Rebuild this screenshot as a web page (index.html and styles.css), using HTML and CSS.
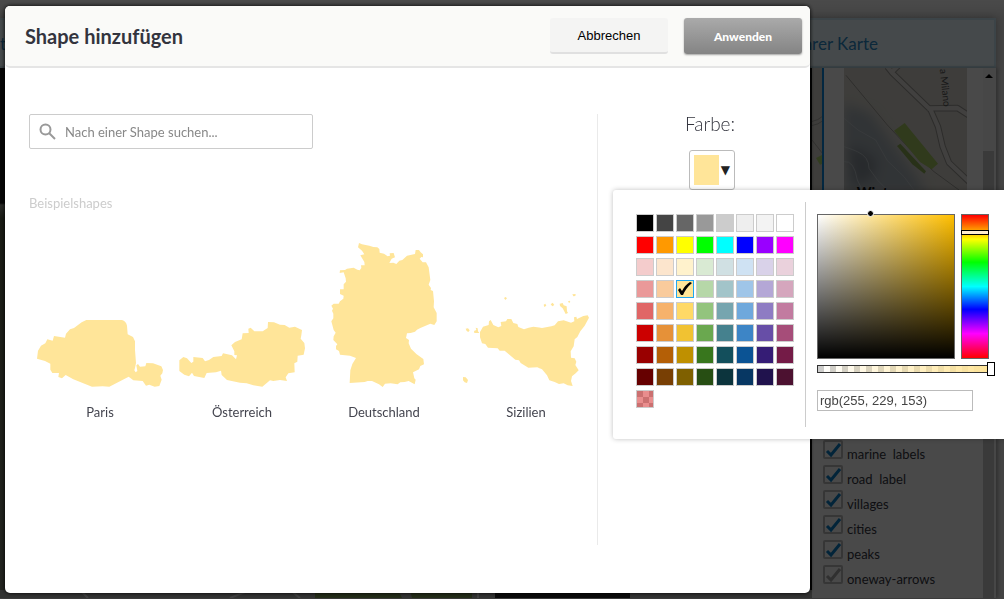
FILE: index.html
```html
<!DOCTYPE html>
<html lang="de">
<head>
<meta charset="utf-8">
<title>Shape hinzufügen</title>
<link rel="stylesheet" href="styles.css">
</head>
<body>
<div class="app">
  <header class="app-header"><span>t</span><span>Stil Ihrer Karte</span></header>
  <div class="app-body">
    <div class="canvas">
      <svg class="canvas-map" viewBox="0 0 812 8" preserveAspectRatio="none" aria-hidden="true">
        <path fill="#a9aaa8" d="M0 0H812V8H0z"/>
        <path fill="#7c9a55" d="M315 0H398L402 8H315zM410 0H472V8H412z"/>
        <path fill="#202020" d="M495 0H630V8H495z"/>
        <path stroke="#ddd" stroke-width="2" d="M80 0l8 8M230 8l20-8M290 0l10 8M478 0v8"/>
      </svg>
    </div>
    <aside class="panel">
      <div class="panel-content">
        <div class="tiles">
          <svg class="tile tile-active" viewBox="0 204 36 366" preserveAspectRatio="xMinYMin slice" aria-hidden="true">
            <path fill="#cfccc5" d="M0 204H36V570H0z"/>
            <g fill="none" stroke="#a5a39e" stroke-width="3"><path d="M-5 366Q18 362 36 346M-5 378Q20 374 36 360M0 420L36 466"/></g>
            <path fill="#a9cc6a" d="M12 474L36 462V490L24 494z"/>
          </svg>
          <svg class="tile" viewBox="120 204 369 366" preserveAspectRatio="xMinYMin slice" aria-hidden="true">
            <defs><filter id="soft"><feGaussianBlur stdDeviation="18"/></filter></defs>
            <path fill="#cfccc5" d="M120 204H489V570H120z"/>
            <g filter="url(#soft)">
              <path fill="#a4adb4" d="M120 310L200 340L250 410L330 520L370 580H120z"/>
              <path fill="#858d95" d="M130 440L180 450L220 480L210 530L150 560z"/>
            </g>
            <g fill="none" stroke="#c4cbd0" stroke-width="2"><path d="M120 355L162 390L215 420L250 482L300 530L330 570M120 440Q150 450 160 455Q195 470 195 505Q220 545 250 570M120 485Q150 480 160 540L175 570"/></g>
            <path fill="none" stroke="#9b9994" stroke-width="3" d="M126 226L250 375L320 450L390 515L465 570"/>
            <g fill="none" stroke="#95938f" stroke-width="19" stroke-linejoin="round"><path d="M250 200L265 219L380 330L402 380L416 440L435 488L500 550M370 325L460 324L500 350M265 214L285 195"/></g>
            <g fill="none" stroke="#dad8d3" stroke-width="13" stroke-linejoin="round"><path d="M250 200L265 219L380 330L402 380L416 440L435 488L500 550M370 325L460 324L500 350M265 214L285 195"/></g>
            <path fill="#a1c25f" d="M270 392L302 369L402 491L383 508L348 486z"/>
            <path fill="#86a551" d="M279 438L289 431L366 514L361 521L325 493z"/>
            <text class="map-street" transform="translate(407 208) rotate(84)">a Milano</text>
            <text class="map-place" x="158" y="590">Winter</text>
          </svg>
        </div>
        <div class="layers">
          <label><input type="checkbox" checked><svg viewBox="0 0 20 19"><path d="M4 11l4 4 9-11"/></svg><span>marine  labels</span></label>
          <label><input type="checkbox" checked><svg viewBox="0 0 20 19"><path d="M4 11l4 4 9-11"/></svg><span>road  label</span></label>
          <label><input type="checkbox" checked><svg viewBox="0 0 20 19"><path d="M4 11l4 4 9-11"/></svg><span>villages</span></label>
          <label><input type="checkbox" checked><svg viewBox="0 0 20 19"><path d="M4 11l4 4 9-11"/></svg><span>cities</span></label>
          <label><input type="checkbox" checked><svg viewBox="0 0 20 19"><path d="M4 11l4 4 9-11"/></svg><span>peaks</span></label>
          <label class="muted"><input type="checkbox" checked><svg viewBox="0 0 20 19"><path d="M4 11l4 4 9-11"/></svg><span>oneway-arrows</span></label>
        </div>
      </div>
      <div class="scrollbar"><svg viewBox="0 0 8 4" width="8" height="4"><path d="M0 4L4 0L8 4z"/></svg><div class="scroll-thumb"></div></div>
    </aside>
  </div>
</div>

<div class="overlay">
  <section class="dialog" role="dialog" aria-labelledby="dialog-title">
    <header class="dialog-header">
      <h1 id="dialog-title">Shape hinzufügen</h1>
      <button class="btn btn-cancel" type="button">Abbrechen</button>
      <button class="btn btn-apply" type="button">Anwenden</button>
    </header>
    <div class="dialog-body">
      <main class="shapes">
        <label class="search">
          <svg viewBox="0 0 17 17" width="17" height="17" aria-hidden="true"><circle cx="6.500" cy="6.500" r="5"/><path d="M10 10l6 6"/></svg>
          <input type="text" placeholder="Nach einer Shape suchen..." aria-label="Nach einer Shape suchen">
        </label>
        <h2>Beispielshapes</h2>
        <div class="shape-grid">
          <figure>
            <svg viewBox="27 -180 426 450"><path d="M199 60H306Q318 63 321 77L323 103L339 111L345 124V150L348 189L345 204L343 211L347 217L352 213L349 196L354 192L360 200L376 199L379 189L399 190L424 199L429 210L427 220L421 227L425 239L418 258L404 260L388 254L378 257L368 243L340 241L326 230L268 260L248 259L216 260L160 238L137 225L126 235L115 231L117 219L97 219L91 209V191L75 183L51 176L54 152L63 137L76 130L82 118L98 122L102 108L135 113L138 101L150 88L162 84L185 67z"/></svg>
            <figcaption>Paris</figcaption>
          </figure>
          <figure>
            <svg viewBox="3 -180 426 450"><path d="M294 66L312 67L330 74L344 75L358 83L375 80L391 88L396 90L394 106L392 116L403 129L405 145L401 164L383 167L382 185L373 190L374 217L355 220L347 232L351 243L330 240L310 243L300 241L277 260L250 256L230 250L210 248L171 240L155 225L153 212L138 217L110 219L103 234L72 228L66 218L57 229L43 224L28 213V181L40 171L51 175L64 189L70 185V171L98 174L105 184L117 180L130 171L155 168L159 160L186 166L198 178L201 166L193 165L193 154L184 136L195 126L215 118L218 100L236 99L235 86L242 83L253 94L278 94L293 84z"/></svg>
            <figcaption>Österreich</figcaption>
          </figure>
          <figure>
            <svg viewBox="9 30 426 450"><path d="M147 39L156 43L178 47L190 51L202 52L208 57L209 68L222 71L233 79L240 77L239 70L251 69L255 82L245 86L238 99L250 98L259 102L268 92L277 90L291 77L315 72L317 60L327 60L332 67L339 73V82L334 81L329 86L338 97L348 97L356 112L361 150L356 164L363 174L362 180L369 183L372 214L371 232L380 249V274L373 285L361 281L331 294L321 299L315 305L302 309L291 310L288 324L297 330L296 340L303 356L320 373L340 387L342 403L331 408L327 418L309 427L313 445L317 449L314 463L296 453L284 456L271 457L263 463L242 460L225 461L218 471L207 463L186 453L173 453L164 456L119 459L121 421L127 402L138 384L120 377L90 374L87 363L78 358V348L82 343L70 330L71 319L77 308L71 300L64 274L70 265V251L66 242L69 236L64 227L71 221L86 221L90 214L100 206L101 197L90 192V178H101V163L108 155L107 145L101 127L89 129L90 121L105 120L111 116L131 113L142 119L149 121L154 114L153 106H164L163 96L151 76L163 73L156 62L144 52z"/></svg>
            <figcaption>Deutschland</figcaption>
          </figure>
          <figure>
            <svg viewBox="15 -120 426 450"><path d="M122 120L130 135L145 142L154 138L152 126L168 124L172 117H184L190 129L202 132L205 141L222 148L236 143L250 140L276 144L304 139L314 136L324 124L341 121L363 128L373 124L372 112L379 110L381 117L400 108L413 106L417 113L404 137L391 154L382 171L374 178L371 199L362 214L363 233L374 235L379 245L376 255L386 271L377 280L366 289L363 303L368 318L353 316L341 310L327 312L314 306L298 301L291 286L276 268L262 262L235 263L212 249L207 241L196 239L164 212H149L143 205L114 203L106 192L96 190L90 172V156L99 140L116 135L117 124z"/><path d="M162 54L167 51L171 55L166 60zM281 74L286 71L289 77L283 81zM302 73L308 68L313 75L307 79zM329 71L338 69L341 76L350 79L351 94L354 99L347 102L338 85L330 78zM354 64L359 62L361 66L357 69zM367 43L377 42L376 48L370 49zM47 146L54 145L59 151L55 156L50 153zM77 143L83 145L84 154L88 159L73 159L72 153L79 150zM39 291L47 292L54 300L51 309L44 307L39 301z"/></svg>
            <figcaption>Sizilien</figcaption>
          </figure>
        </div>
      </main>
      <aside class="color-side">
        <h3>Farbe:</h3>
        <div class="color-anchor">
          <button class="color-button" type="button" aria-label="Farbe wählen"><span class="color-preview"></span><span class="caret">▼</span></button>
          <div class="picker">
            <div class="palette"></div>
            <div class="picker-tools">
              <div class="gradients">
                <div class="saturation"><span class="dragger"></span></div>
                <div class="hue"><input type="range" min="0" max="360" value="40" aria-label="Farbton"></div>
              </div>
              <div class="alpha"><input type="range" min="0" max="100" value="100" aria-label="Deckkraft"></div>
              <input class="color-text" type="text" value="rgb(255, 229, 153)" aria-label="Farbwert">
            </div>
          </div>
        </div>
      </aside>
    </div>
  </section>
</div>
<script src="script.js"></script>
</body>
</html>
```

FILE: styles.css
```css
* { box-sizing: border-box; }
body {
  margin: 0;
  min-height: 100vh;
  overflow: hidden;
  background: #f4f4f4;
  color: #33343e;
  font-family: Lato, "Open Sans", sans-serif;
  font-size: 14px;
}
h1, h2, h3, figure { margin: 0; }
button, input { font: inherit; }

/* application behind the dialog */
.app {
  display: flex;
  flex-direction: column;
  height: 100vh;
  padding: 18px 8px 1px 0;
  background: linear-gradient(#f8f8f8, #e2e2e2 18px);
}
.app-header {
  display: flex;
  justify-content: space-between;
  align-items: center;
  height: 50px;
  padding: 0 116px 0 0;
  border: 2px solid #c9e5f0;
  border-left: 0;
  background: #e8f6fb;
  box-shadow: 0 0 8px rgba(0, 0, 0, .3);
  color: #2a86c4;
  font-size: 17px;
}
.app-body { flex: 1; display: flex; min-height: 0; box-shadow: 2px 0 4px rgba(0, 0, 0, .3); }
.canvas {
  flex: 1;
  display: flex;
  align-items: flex-end;
  background: linear-gradient(90deg, transparent 50%, #0a0a0a 50%), linear-gradient(#141414 135px, #8c8f86 137px, #565c45 150px, #74796a 100%);
}
.canvas-map { width: 100%; height: 8px; }
.panel { display: flex; width: 184px; background: #f4f4f4; }
.panel-content {
  flex: 1;
  display: flex;
  flex-direction: column;
  justify-content: space-between;
  min-width: 0;
}
.tiles { display: flex; gap: 20px; }
.tile { width: 123px; height: 122px; }
.tile-active { width: 12px; border-right: 2px solid #0a84d8; }
.map-street { fill: #555; font: 30px Lato, sans-serif; }
.map-place { fill: #111; font: 900 42px Lato, sans-serif; }
.layers { padding: 0 0 8px 11px; font-size: 13px; }
.layers label { display: grid; grid-template-columns: 20px 1fr; gap: 4px; height: 25px; }
.layers input {
  grid-area: 1 / 1;
  appearance: none;
  width: 20px;
  height: 19px;
  margin: 0;
  border: 2px solid #b4b4b4;
  border-radius: 2px;
}
.layers svg { grid-area: 1 / 1; width: 20px; height: 19px; fill: none; stroke: #0879c0; stroke-width: 3; }
.layers .muted svg { stroke: #a0a0a0; }
.layers span { padding-top: 2px; line-height: 25px; white-space: pre; }
.scrollbar { display: flex; flex-direction: column; align-items: center; width: 13px; padding: 6px 2px 0 0; background: #eee; }
.scroll-thumb { flex: 1; width: 11px; margin-top: 73px; background: #c2c2c2; }

/* dialog */
.overlay {
  position: fixed;
  inset: 0;
  display: flex;
  padding: 6px 194px 6px 5px;
  background: rgba(0, 0, 0, .7);
}
.dialog {
  flex: 1;
  border-radius: 5px;
  background: #fff;
  box-shadow: 0 0 4px #000;
}
.dialog-header {
  display: flex;
  align-items: center;
  gap: 16px;
  height: 62px;
  padding: 0 8px 0 20px;
  border-bottom: 2px solid #e5e5e5;
  border-radius: 5px;
  background: #fafaf8;
}
.dialog-header h1 { flex: 1; font-size: 20px; font-weight: 700; }
.btn { width: 118px; height: 36px; padding: 0; border: 0; border-radius: 3px; }
.btn-cancel {
  border-bottom: 2px solid #e0e0e0;
  background: #f4f4f3;
  color: #000;
  font: 13px "Liberation Sans", Arial, sans-serif;
}
.btn-apply {
  background: linear-gradient(#aaa, #848484);
  box-shadow: 0 1px 2px rgba(0, 0, 0, .35);
  color: #fff;
  font-size: 12px;
  font-weight: 900;
}
.dialog-body { display: flex; padding: 46px 0 48px 24px; height: calc(100% - 62px); }
.shapes { flex: 1; }
.search {
  display: flex;
  align-items: center;
  gap: 9px;
  width: 284px;
  height: 35px;
  padding: 0 9px;
  border: 1px solid #ccc;
  border-radius: 2px;
}
.search svg { fill: none; stroke: #999; stroke-width: 2; }
.search input { flex: 1; min-width: 0; padding: 0; border: 0; outline: 0; background: none; font-size: 13px; }
.search input::placeholder { color: #888; opacity: 1; }
.shapes h2 { margin-top: 44px; color: #ccc; font-size: 13px; font-weight: 400; line-height: 20px; }
.shape-grid { display: grid; grid-template-columns: repeat(4, 1fr); margin-top: 27px; }
.shape-grid svg { display: block; width: 100%; height: 150px; fill: #ffe599; }
.shape-grid figcaption { padding-top: 12px; color: #44454f; font-size: 13px; line-height: 20px; text-align: center; }
.color-side { display: flex; flex-direction: column; align-items: center; width: 213px; border-left: 1px solid #eaeaea; }
.color-side h3 { margin-right: -12px; font-size: 19px; font-weight: 300; line-height: 20px; }
.color-anchor { position: relative; margin: 16px -16px 0 0; }
.color-button {
  display: flex;
  align-items: center;
  gap: 2px;
  width: 46px;
  height: 40px;
  padding: 0 4px;
  border: 1px solid #bbb;
  border-radius: 3px;
  background: #fff;
  color: #222;
}
.color-preview { width: 25px; height: 30px; background: #ffe599; }
.caret { font: 12px "DejaVu Sans", sans-serif; }

/* color picker popup */
.picker {
  position: absolute;
  top: 40px;
  left: -76px;
  display: flex;
  width: 400px;
  padding: 12px 8px 12px 23px;
  border-radius: 3px;
  background: #fff;
  box-shadow: 0 0 5px rgba(0, 0, 0, .25);
}
.palette { display: grid; grid-template-columns: repeat(8, 18px); grid-auto-rows: 18px; gap: 4px 2px; padding: 12px 11px 0 0; }
.swatch { width: 18px; height: 18px; padding: 0; border: 1px solid #ccc; }
.swatch svg { display: block; width: 16px; height: 16px; }
.swatch.selected { border-color: #22a7f0; }
.swatch.recent {
  background: conic-gradient(#e98d8d 25%, #cb7070 0 50%, #e98d8d 0 75%, #cb7070 0) 0 0 / 12px 12px;
}
.picker-tools { padding: 12px 0 16px 11px; border-left: 1px solid #ccc; }
.gradients { display: flex; gap: 6px; height: 145px; }
.saturation {
  position: relative;
  width: 138px;
  border: 1px solid #666;
  background: linear-gradient(transparent, #000), linear-gradient(90deg, #fff, #ffbf00);
}
.dragger { position: absolute; top: -5px; left: 49px; width: 7px; height: 7px; border: 1px solid #fff; border-radius: 50%; background: #000; }
.hue {
  display: flex;
  width: 28px;
  border: 1px solid #666;
  background: linear-gradient(red, #ff0 17%, lime 33%, cyan 50%, blue 66%, magenta 83%, red);
}
.hue input { appearance: none; writing-mode: vertical-lr; width: 28px; height: 143px; margin: 0 -1px; background: none; }
.hue input::-webkit-slider-thumb { appearance: none; width: 28px; height: 5px; border: 1px solid #000; background: #ffeccc; }
.alpha {
  display: flex;
  align-items: center;
  width: 172px;
  height: 8px;
  margin-top: 6px;
  border: 1px solid #333;
  background:
    linear-gradient(90deg, rgba(255, 229, 153, 0), #ffe599),
    conic-gradient(#fff 25%, #ccc 0 50%, #fff 0 75%, #ccc 0) 0 0 / 12px 12px;
}
.alpha input { flex: none; appearance: none; width: 177px; height: 14px; margin: 0; background: none; }
.alpha input::-webkit-slider-thumb { appearance: none; width: 8px; height: 14px; border: 1px solid #000; background: #fff; }
.color-text {
  display: block;
  width: 156px;
  height: 21px;
  margin-top: 17px;
  padding: 0 2px;
  border: 1px solid #bbb;
  color: #444;
  font: 13px "Liberation Sans", Arial, sans-serif;
}
```

FILE: script.js
```js
const colors = [
  "#000000 #444444 #666666 #999999 #cccccc #eeeeee #f3f3f3 #ffffff",
  "#ff0000 #ff9900 #ffff00 #00ff00 #00ffff #0000ff #9900ff #ff00ff",
  "#f4cccc #fce5cd #fff2cc #d9ead3 #d0e0e3 #cfe2f3 #d9d2e9 #ead1dc",
  "#ea9999 #f9cb9c #ffe599 #b6d7a8 #a2c4c9 #9fc5e8 #b4a7d6 #d5a6bd",
  "#e06666 #f6b26b #ffd966 #93c47d #76a5af #6fa8dc #8e7cc3 #c27ba0",
  "#cc0000 #e69138 #f1c232 #6aa84f #45818e #3d85c6 #674ea7 #a64d79",
  "#990000 #b45f06 #bf9000 #38761d #134f5c #0b5394 #351c75 #741b47",
  "#660000 #783f04 #7f6000 #274e13 #0c343d #073763 #20124d #4c1130"
].join(" ").split(" ");
const palette = document.querySelector(".palette");
for (const color of colors) {
  const swatch = document.createElement("button");
  swatch.type = "button";
  swatch.className = "swatch";
  swatch.style.background = color;
  swatch.setAttribute("aria-label", color);
  if (color === "#ffe599") {
    swatch.classList.add("selected");
    swatch.innerHTML = '<svg viewBox="0 0 16 16"><path d="M1 9L3 7L5 10Q8 4 13 1L15 2Q9 7 6 14L4 14z"/></svg>';
  }
  palette.append(swatch);
}
const recent = document.createElement("button");
recent.type = "button";
recent.className = "swatch recent";
recent.setAttribute("aria-label", "Zuletzt verwendet");
palette.append(recent);
```
